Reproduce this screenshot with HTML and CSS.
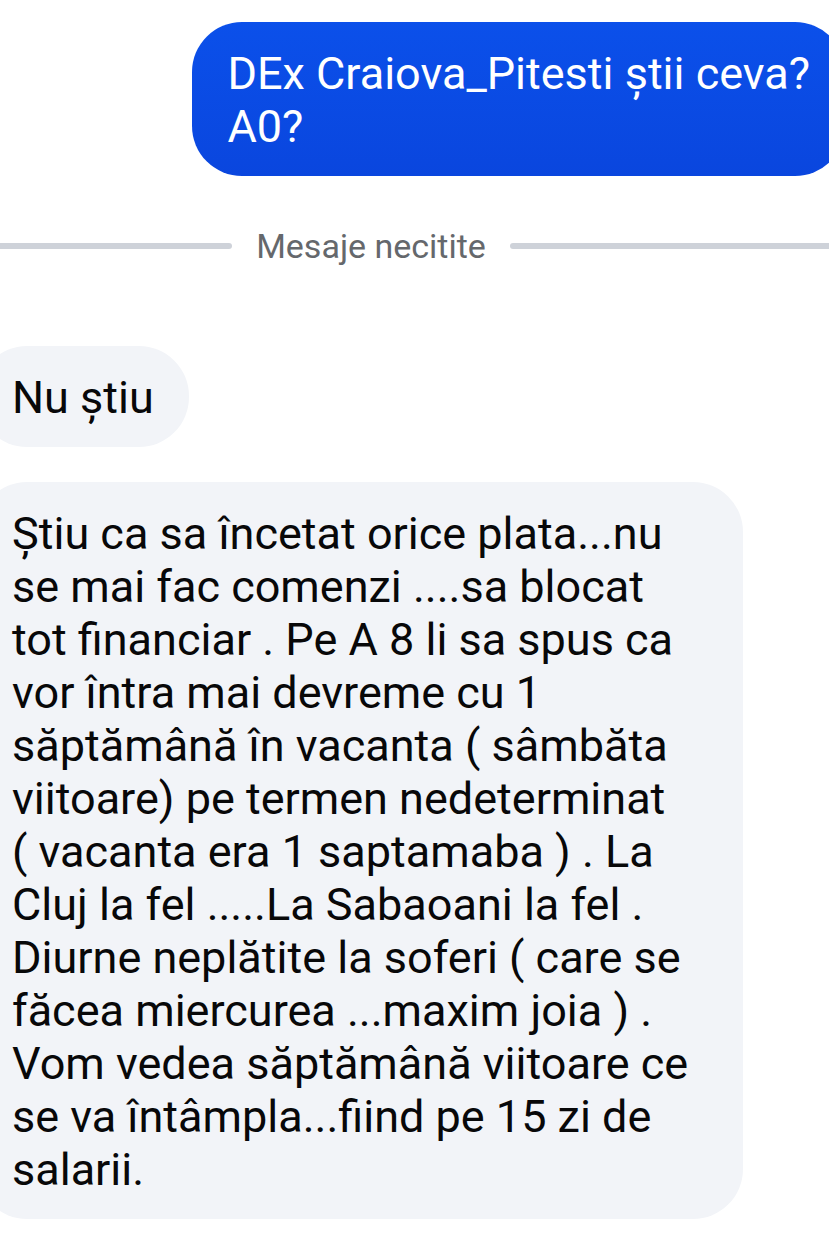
FILE: index.html
```
<!DOCTYPE html>
<html lang="ro">
<head>
    <meta charset="utf-8">
    <title>Mesaje</title>
    <link rel="stylesheet" href="styles.css">
</head>
<body>
    <div class="chat">
        <div class="message sent">DEx Craiova_Pitesti știi ceva?<br>A0?</div>

        <div class="divider"><span>Mesaje necitite</span></div>

        <div class="message received">Nu știu</div>

        <div class="message received long">
            Știu ca sa încetat orice plata...nu<br>
            se mai fac comenzi ....sa blocat<br>
            tot financiar . Pe A 8 li sa spus ca<br>
            vor întra mai devreme cu 1<br>
            săptămână în vacanta ( sâmbăta<br>
            viitoare) pe termen nedeterminat<br>
            ( vacanta era 1 saptamaba ) . La<br>
            Cluj la fel .....La Sabaoani la fel .<br>
            Diurne neplătite la soferi ( care se<br>
            făcea miercurea ...maxim joia ) .<br>
            Vom vedea săptămână viitoare ce<br>
            se va întâmpla...fiind pe 15 zi de<br>
            salarii.
        </div>
    </div>
</body>
</html>
```
FILE: styles.css
```
body {
    margin: 0;
    background: #fff;
    font-family: Roboto, "Noto Sans", sans-serif;
    overflow-x: hidden;
}

.chat {
    display: flex;
    flex-direction: column;
    align-items: flex-start;
    padding: 22px 0 30px;
}

.message {
    padding: 25px 35px 23px;
    border-radius: 50px;
    font-size: 45px;
    line-height: 53px;
}

.sent {
    align-self: flex-end;
    margin-right: -16px;
    background: linear-gradient(to bottom, #0b50ea, #0a46de);
    color: #fff;
}

/* the bubble runs past the left edge of the window */
.received {
    margin-left: -23px;
    margin-bottom: 35px;
    background: #f2f4f8;
    color: #080809;
}

.long {
    margin-bottom: 0;
    padding-right: 55px;
}

.divider {
    display: flex;
    align-items: center;
    align-self: stretch;
    gap: 24px;
    margin: 50px 0 80px -87px;
    color: #65686c;
    font-size: 34px;
    line-height: 40px;
}

.divider::before,
.divider::after {
    content: "";
    height: 6px;
    background: #ced2d9;
    border-radius: 3px;
    flex: 1;
}

.divider::after {
    border-radius: 3px 0 0 3px;
}
```
